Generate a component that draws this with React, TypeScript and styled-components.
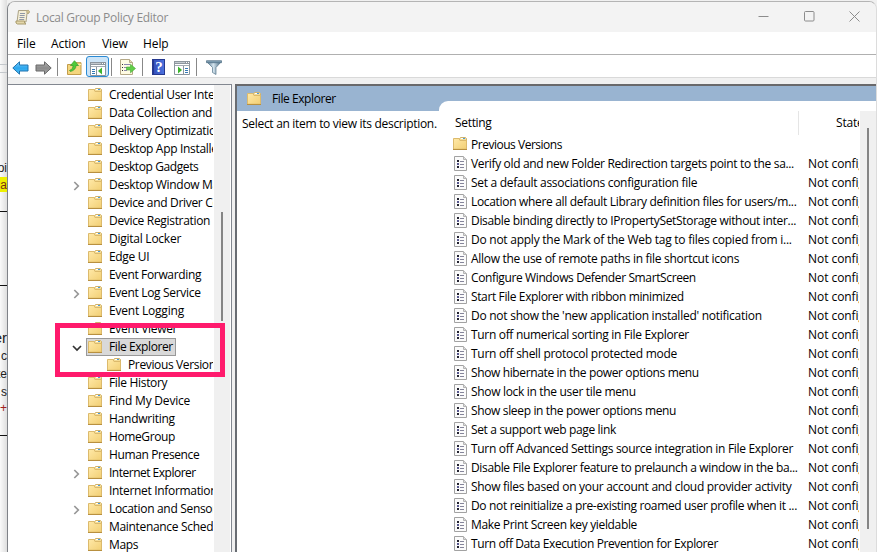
import React from 'react';
import styled, { createGlobalStyle, css } from 'styled-components';

const GlobalStyle = createGlobalStyle`
  * {
    box-sizing: border-box;
  }

  body {
    margin: 0;
    overflow: hidden;
    background: #f0f0f0;
    color: #000;
    font-family: 'Open Sans', 'Noto Sans', sans-serif;
    font-size: 12px;
  }

  svg {
    display: block;
    flex: none;
  }
`;

const Desktop = styled.div`
  display: flex;
  width: 877px;
  height: 552px;
  overflow: hidden;
`;

const BackPage = styled.div`
  flex: none;
  width: 7px;
  height: 552px;
  overflow: hidden;
  background: linear-gradient(90deg, #fafafa, #dedede);
`;

const BackGap = styled.div<{ $height: number }>`
  height: ${({ $height }) => $height}px;
`;

const BackRule = styled.div<{ $color?: string }>`
  height: 1px;
  background: ${({ $color }) => $color || '#111'};
`;

const BackText = styled.div<{ $height: number; $size?: number; $color?: string; $mark?: boolean }>`
  display: flex;
  justify-content: flex-end;
  align-items: center;
  height: ${({ $height }) => $height}px;
  font-family: 'Liberation Sans', sans-serif;
  font-size: ${({ $size }) => $size || 12}px;
  color: ${({ $color }) => $color || '#222'};
  background: ${({ $mark }) => ($mark ? '#eef000' : 'transparent')};
`;

const Window = styled.div`
  flex: none;
  display: flex;
  flex-direction: column;
  width: 870px;
  height: 551px;
  margin-top: 1px;
  border: 1px solid #b4b4b4;
  border-left-color: #7f8287;
  border-right-color: #dcdcdc;
  border-bottom: none;
  border-radius: 8px 8px 0 0;
  background: #f0f0f0;
  overflow: hidden;
`;

const TitleBar = styled.div`
  flex: none;
  display: flex;
  align-items: center;
  height: 30px;
  padding-left: 7px;
  background: #f3f3f3;
`;

const TitleText = styled.div`
  flex: 1;
  margin-left: 6px;
  color: #8c8c8c;
  letter-spacing: -0.3px;
`;

const Caption = styled.div`
  display: flex;
  align-items: center;
  justify-content: center;
  width: 45.5px;
  height: 30px;
  padding: 0 0 2px 3px;
`;

const MenuBar = styled.div`
  flex: none;
  display: flex;
  align-items: center;
  gap: 16px;
  height: 23px;
  padding-left: 9px;
  background: #fff;
  border-bottom: 1px solid #b0b0b0;
`;

const MenuItem = styled.div<{ $width: number }>`
  width: ${({ $width }) => $width}px;
  white-space: nowrap;
  letter-spacing: -0.1px;
`;

const ToolBar = styled.div`
  flex: none;
  display: flex;
  align-items: center;
  height: 23px;
  padding-left: 4px;
  background: #fff;
  border-bottom: 1px solid #d9d9d9;
`;

const Tool = styled.div<{ $active?: boolean; $width: number; $drop?: number; $left?: number; $right?: number }>`
  display: flex;
  align-items: center;
  justify-content: center;
  width: ${({ $width }) => $width}px;
  height: 22px;
  padding: ${({ $drop = 2, $right = 0, $left = 0 }) => `${$drop}px ${$right}px 0 ${$left}px`};
  ${({ $active }) =>
    $active &&
    css`
      height: 21px;
      margin: 1px 2px 0 0;
      background: #cce4f7;
      border: 1px solid #2a8ad4;
      border-radius: 3px;
    `}
`;

const ToolSeparator = styled.div`
  width: 1px;
  height: 18px;
  margin-top: 1px;
  background: #888;
`;

const Panels = styled.div`
  flex: 1;
  display: flex;
  min-height: 0;
  padding-top: 6px;
`;

const TreePanel = styled.div`
  flex: none;
  display: flex;
  width: 224px;
  background: #fff;
  border-top: 1px solid #828790;
  border-right: 1px solid #828790;
`;

const Tree = styled.div`
  width: 205px;
  margin-right: 1px;
  padding-top: 1px;
  overflow: hidden;
`;

const TreeRow = styled.div<{ $depth: number }>`
  display: flex;
  align-items: center;
  height: 18px;
  padding-left: ${({ $depth }) => 63 + $depth * 19}px;
  white-space: nowrap;
`;

const Expander = styled.div`
  flex: none;
  display: flex;
  justify-content: center;
  width: 11px;
  margin-right: 4px;
  padding-top: 2px;
`;

const TreeLabel = styled.div<{ $selected?: boolean }>`
  flex: none;
  display: flex;
  align-items: center;
  gap: 7px;
  height: 18px;
  padding: 0 2px 0 1px;
  border: 1px solid ${({ $selected }) => ($selected ? '#999' : 'transparent')};
  background: ${({ $selected }) => ($selected ? '#d9d9d9' : 'transparent')};
`;

const Text = styled.span<{ $tracking?: number; $drop?: number }>`
  padding-top: ${({ $drop }) => $drop || 0}px;
  line-height: 16px;
  letter-spacing: ${({ $tracking }) => $tracking ?? -0.32}px;
  white-space: nowrap;
`;

const ScrollBar = styled.div<{ $width: number }>`
  flex: none;
  display: flex;
  justify-content: center;
  width: ${({ $width }) => $width}px;
  background: #f0f0f0;
`;

const Thumb = styled.div<{ $top: number; $height: number }>`
  width: 2px;
  height: ${({ $height }) => $height}px;
  margin-top: ${({ $top }) => $top}px;
  background: #858585;
`;

const ResultPanel = styled.div`
  flex: 1;
  min-width: 0;
  display: flex;
  flex-direction: column;
  margin-left: 3px;
  border-top: 2px solid #69696b;
  border-left: 2px solid #696d73;
  background: #fff;
`;

const ResultBody = styled.div`
  flex: 1;
  min-height: 0;
  display: grid;
  grid-template-columns: 202px 1fr;
  background: linear-gradient(#99b4d1 25px, #fff 25px);
`;

const Description = styled.div`
  display: flex;
  flex-direction: column;
`;

const DescriptionHeader = styled.div`
  display: flex;
  align-items: center;
  gap: 11px;
  height: 25px;
  padding-left: 10px;
`;

const DescriptionText = styled.div`
  display: flex;
  padding: 5px 0 0 5px;
  white-space: nowrap;
`;

const ListPane = styled.div`
  display: flex;
  flex-direction: column;
  min-width: 0;
  margin-top: 15px;
  border-top-left-radius: 9px;
  background: #fff;
`;

const ListBody = styled.div`
  flex: 1;
  display: flex;
  min-height: 0;
  margin-top: 10px;
`;

const List = styled.div`
  width: 420px;
  margin-right: 1px;
  overflow: hidden;
  padding-left: 12px;
`;

const ListHeader = styled.div`
  display: flex;
  height: 24px;
`;

const HeaderCell = styled.div<{ $width?: number; $indent: number }>`
  flex: none;
  display: flex;
  align-items: center;
  width: ${({ $width }) => ($width ? `${$width}px` : 'auto')};
  padding-left: ${({ $indent }) => $indent}px;
  border-right: ${({ $width }) => ($width ? '1px solid #e5e5e5' : 'none')};
`;

const ListRow = styled.div`
  display: flex;
  align-items: center;
  height: 19px;
  white-space: nowrap;
`;

const NameCell = styled.div<{ $policy?: boolean }>`
  flex: none;
  display: flex;
  align-items: center;
  gap: 4px;
  width: 357px;
  padding-left: ${({ $policy }) => ($policy ? 3 : 2)}px;
`;

// Marker frame drawn over the tree to point out the selected node
const Highlight = styled.div`
  position: absolute;
  left: 55px;
  top: 323px;
  width: 170px;
  height: 54px;
  border: 5px solid #ff1a6c;
`;

const FolderSvg = styled.svg<{ $lift: number }>`
  margin-bottom: ${({ $lift }) => $lift}px;
`;

const FolderIcon = ({ lift = 0 }: { lift?: number }) => (
  <FolderSvg $lift={lift} width="14" height="13" viewBox="0 0 14 13">
    <defs>
      <linearGradient id="folder" x1="0" y1="0" x2="1" y2="1">
        <stop offset="0" stopColor="#ffe9a8" />
        <stop offset="1" stopColor="#f2cf74" />
      </linearGradient>
    </defs>
    <path d="M6.500 4V1.500l1-1h5l1 1V4z" fill="#f4dc96" stroke="#d0b26c" />
    <path d="M8 1.500h2" stroke="#fff" />
    <path d="M10 1.500h2" stroke="#4a9ad8" />
    <path d="M.5 12.200V1.500h5.500l1 2h6.500v8.700z" fill="url(#folder)" stroke="#dcba6c" />
    <path d="M0 12.500h14" stroke="#b89040" />
  </FolderSvg>
);

const PolicyIcon = () => (
  <svg width="13" height="15" viewBox="0 0 13 15">
    <path d="M.5.5h9l3 3v11H.5z" fill="#fbfbfb" stroke="#a2a2a2" />
    <path d="M9.500.5v3h3" fill="#ddd" stroke="#b4b4b4" />
    <path d="M3 4h2v2H3zM3 10h2v2H3z" fill="#222230" />
    <path d="M3 7h2v2H3z" fill="#55558c" />
    <path d="M6 5.500h4M6 8.500h4M6 11.500h4" stroke="#85859a" />
  </svg>
);

const Chevron = ({ open }: { open?: boolean }) =>
  open ? (
    <svg width="10" height="8" viewBox="0 0 10 8">
      <path d="M1 2l4 4 4-4" fill="none" stroke="#333" strokeWidth="1.700" />
    </svg>
  ) : (
    <svg width="7" height="10" viewBox="0 0 7 10">
      <path d="M1.300 1l4 4-4 4" fill="none" stroke="#979797" strokeWidth="1.700" />
    </svg>
  );

const ScrollIcon = () => (
  <svg width="15" height="16" viewBox="0 0 15 16">
    <path d="M3.500 1.500h10q1 1 0 3h-1.500l-1 8.500H2z" fill="#f5efd8" stroke="#aaa184" />
    <path d="M11.500 1.500q2.500-.8 3 1t-2.500 2z" fill="#d4c593" stroke="#b1a57d" strokeWidth=".7" />
    <path d="M1 12h8.500q-.5 2.500 1.500 3H2.500Q.3 14.500 1 12z" fill="#e4d7aa" stroke="#a89a6c" />
    <path d="M5 4.500h5M4.700 6.500h5M4.500 8.500h5M4.200 10.500h5" stroke="#9098a6" />
  </svg>
);

const ArrowIcon = ({ back }: { back?: boolean }) => (
  <svg width="17" height="14" viewBox="0 0 17 14" transform={back ? undefined : 'scale(-1 1)'}>
    <defs>
      <linearGradient id={back ? 'back' : 'forward'} x1="0" y1="0" x2="0" y2="1">
        <stop offset="0" stopColor={back ? '#7fd0ff' : '#b5b5b5'} />
        <stop offset=".5" stopColor={back ? '#2ca7ee' : '#8b8b8b'} />
        <stop offset="1" stopColor={back ? '#50c1f9' : '#aaa'} />
      </linearGradient>
    </defs>
    <path
      d="M.8 7L7.500 .8V4H16v6H7.500v3.200z"
      fill={`url(#${back ? 'back' : 'forward'})`}
      stroke={back ? '#2173ae' : '#686868'}
    />
  </svg>
);

const FolderUpIcon = () => (
  <svg width="15" height="15" viewBox="0 0 15 15">
    <path d="M.5 14.500V4.500h7l1-1.800h5.500v11.800z" fill="#f4d67e" stroke="#c39d4b" />
    <path d="M10 4.500h4" stroke="#fff0b8" />
    <path d="M2.500 10.500c2.800-1 3.500-3 3.500-5H3.500L7.500.7l4 4.800H9c0 3-2 5-5.500 6z" fill="#4fca3b" stroke="#329c28" strokeWidth=".7" />
  </svg>
);

const PaneIcon = ({ flip }: { flip?: boolean }) => (
  <svg width="16" height="14" viewBox="0 0 16 14">
    <path d="M.5.5h15v13H.5z" fill="#fff" stroke="#8b959e" />
    <path d="M0 0h16v3H0z" fill="#8d969e" />
    <path d="M1 1.500h10" stroke="#c4cad0" />
    <path d="M12 1.500h1M14 1.500h1" stroke="#fff" />
    <path d="M1 4.500h14" stroke="#a4acb4" />
    {flip ? (
      <>
        <path d="M9.500 5v8" stroke="#8b959e" />
        <path d="M4 5.500L8 9l-4 3.500z" fill="#3cb52e" />
        <path d="M11 7.500h3M11 9.500h3M11 11.500h3" stroke="#3579b5" />
      </>
    ) : (
      <>
        <path d="M6.500 5v8" stroke="#8b959e" />
        <path d="M12 5.500L8 9l4 3.500z" fill="#3cb52e" />
        <path d="M2 7.500h3M2 9.500h3M2 11.500h3" stroke="#3579b5" />
      </>
    )}
  </svg>
);

const ExportIcon = () => (
  <svg width="16" height="16" viewBox="0 0 16 16">
    <path d="M.5.5h9l3 3v12H.5z" fill="#fffbe3" stroke="#b5a987" />
    <path d="M9.500.5v3h3" fill="#e9dcb4" stroke="#b5a987" />
    <path d="M2 5.500h1M2 8.500h1M2 11.500h1" stroke="#333" />
    <path d="M4 5.500h6M4 8.500h3M4 11.500h3" stroke="#8b86ac" />
    <path d="M6.500 8h4V5.200l5 4.300-5 4.300V11h-4z" fill="#62ce49" stroke="#48a936" strokeWidth=".6" />
  </svg>
);

const HelpBox = styled.div`
  width: 13px;
  height: 16px;
  border: 1px solid #25388f;
  border-left-width: 2px;
  background: linear-gradient(90deg, #3551bd, #4c72de);
  color: #fff;
  font: bold 15px/14px 'Liberation Serif', serif;
  text-align: center;
`;

const FilterIcon = () => (
  <svg width="16" height="15" viewBox="0 0 16 15">
    <defs>
      <linearGradient id="filter" x1="0" y1="0" x2="1" y2="0">
        <stop offset="0" stopColor="#55768e" />
        <stop offset=".45" stopColor="#d4e4ee" />
        <stop offset="1" stopColor="#44677f" />
      </linearGradient>
    </defs>
    <path d="M1 2l5.500 5.500v5l3.500 2V7.500L15 2z" fill="url(#filter)" stroke="#56758b" strokeWidth=".7" />
    <path d="M.5.700h15v2H.5z" fill="#82a1b5" stroke="#4c6b81" strokeWidth=".7" />
  </svg>
);

interface Node {
  label: string;
  expander?: 'open' | 'closed';
  selected?: boolean;
  depth?: number;
  tracking?: number;
}

const nodes: Node[] = [
  { label: 'Credential User Interface' },
  { label: 'Data Collection and Preview Builds' },
  { label: 'Delivery Optimization' },
  { label: 'Desktop App Installer' },
  { label: 'Desktop Gadgets', tracking: -0.4 },
  { label: 'Desktop Window Manager', expander: 'closed' },
  { label: 'Device and Driver Compatibility' },
  { label: 'Device Registration' },
  { label: 'Digital Locker', tracking: -0.25 },
  { label: 'Edge UI' },
  { label: 'Event Forwarding', tracking: -0.34 },
  { label: 'Event Log Service', expander: 'closed' },
  { label: 'Event Logging', tracking: -0.2 },
  { label: 'Event Viewer' },
  { label: 'File Explorer', expander: 'open', selected: true, tracking: -0.42 },
  { label: 'Previous Versions', depth: 1, tracking: -0.36 },
  { label: 'File History' },
  { label: 'Find My Device', tracking: -0.2 },
  { label: 'Handwriting', tracking: -0.25 },
  { label: 'HomeGroup', tracking: -0.4 },
  { label: 'Human Presence', tracking: -0.38 },
  { label: 'Internet Explorer', expander: 'closed', tracking: -0.5 },
  { label: 'Internet Information Services' },
  { label: 'Location and Sensors', expander: 'closed' },
  { label: 'Maintenance Scheduler' },
  { label: 'Maps' },
];

const settings: { name: string; tracking?: number }[] = [
  { name: 'Verify old and new Folder Redirection targets point to the sa...', tracking: -0.34 },
  { name: 'Set a default associations configuration file', tracking: -0.29 },
  { name: 'Location where all default Library definition files for users/m...' },
  { name: 'Disable binding directly to IPropertySetStorage without inter...' },
  { name: 'Do not apply the Mark of the Web tag to files copied from i...', tracking: -0.25 },
  { name: 'Allow the use of remote paths in file shortcut icons', tracking: -0.29 },
  { name: 'Configure Windows Defender SmartScreen', tracking: -0.38 },
  { name: 'Start File Explorer with ribbon minimized', tracking: -0.37 },
  { name: "Do not show the 'new application installed' notification", tracking: -0.26 },
  { name: 'Turn off numerical sorting in File Explorer' },
  { name: 'Turn off shell protocol protected mode', tracking: -0.29 },
  { name: 'Show hibernate in the power options menu', tracking: -0.37 },
  { name: 'Show lock in the user tile menu' },
  { name: 'Show sleep in the power options menu', tracking: -0.35 },
  { name: 'Set a support web page link', tracking: -0.35 },
  { name: 'Turn off Advanced Settings source integration in File Explorer', tracking: -0.31 },
  { name: 'Disable File Explorer feature to prelaunch a window in the ba...', tracking: -0.36 },
  { name: 'Show files based on your account and cloud provider activity', tracking: -0.29 },
  { name: 'Do not reinitialize a pre-existing roamed user profile when it ...', tracking: -0.34 },
  { name: 'Make Print Screen key yieldable', tracking: -0.35 },
  { name: 'Turn off Data Execution Prevention for Explorer', tracking: -0.39 },
];

const App: React.FC = () => {
  return (
    <>
      <GlobalStyle />
      <Desktop>
        <BackPage>
          <BackGap $height={64} />
          <BackRule $color="#c4c8cc" />
          <BackGap $height={7} />
          <BackRule $color="#c4c8cc" />
          <BackGap $height={87} />
          <BackText $height={16}>oi</BackText>
          <BackGap $height={1} />
          <BackText $height={15} $mark $color="#7a3010">a</BackText>
          <BackGap $height={19} />
          <BackRule />
          <BackGap $height={73} />
          <BackRule />
          <BackGap $height={41} />
          <BackText $height={20} $size={15}>er</BackText>
          <BackText $height={18}>c</BackText>
          <BackText $height={18}>te</BackText>
          <BackText $height={17}>s</BackText>
          <BackText $height={16} $color="#a02020">+</BackText>
          <BackGap $height={19} />
          <BackRule />
        </BackPage>
        <Window>
          <TitleBar>
            <ScrollIcon />
            <TitleText>Local Group Policy Editor</TitleText>
            <Caption>
              <svg width="11" height="11"><path d="M.5 5.500h10" stroke="#8c8c8c" /></svg>
            </Caption>
            <Caption>
              <svg width="11" height="11"><rect x=".5" y=".5" width="9.500" height="9.500" rx="1" fill="none" stroke="#8c8c8c" /></svg>
            </Caption>
            <Caption>
              <svg width="11" height="11"><path d="M.5.5l10 10M10.500.5l-10 10" stroke="#8c8c8c" /></svg>
            </Caption>
          </TitleBar>
          <MenuBar>
            <MenuItem $width={18}>File</MenuItem>
            <MenuItem $width={35}>Action</MenuItem>
            <MenuItem $width={25}>View</MenuItem>
            <MenuItem $width={26}>Help</MenuItem>
          </MenuBar>
          <ToolBar>
            <Tool $width={16} $drop={4}><ArrowIcon back /></Tool>
            <Tool $width={29} $drop={4} $left={1}><ArrowIcon /></Tool>
            <ToolSeparator />
            <Tool $width={28} $drop={3} $left={4}><FolderUpIcon /></Tool>
            <Tool $active $width={23} $drop={5}><PaneIcon /></Tool>
            <ToolSeparator />
            <Tool $width={30} $left={2}><ExportIcon /></Tool>
            <ToolSeparator />
            <Tool $width={31}><HelpBox>?</HelpBox></Tool>
            <Tool $width={22} $drop={4} $right={6}><PaneIcon flip /></Tool>
            <ToolSeparator />
            <Tool $width={33} $drop={3}><FilterIcon /></Tool>
          </ToolBar>
          <Panels>
            <TreePanel>
              <Tree>
                {nodes.map((node) => (
                  <TreeRow key={node.label} $depth={node.depth || 0}>
                    <Expander>{node.expander && <Chevron open={node.expander === 'open'} />}</Expander>
                    <TreeLabel $selected={node.selected}>
                      <FolderIcon lift={1} />
                      <Text $tracking={node.tracking}>{node.label}</Text>
                    </TreeLabel>
                  </TreeRow>
                ))}
              </Tree>
              <ScrollBar $width={16}>
                <Thumb $top={127} $height={109} />
              </ScrollBar>
            </TreePanel>
            <ResultPanel>
              <ResultBody>
                <Description>
                  <DescriptionHeader>
                    <FolderIcon />
                    <Text $tracking={-0.42} $drop={1}>File Explorer</Text>
                  </DescriptionHeader>
                  <DescriptionText>
                    <Text $tracking={-0.3}>Select an item to view its description.</Text>
                  </DescriptionText>
                </Description>
                <ListPane>
                  <ListBody>
                    <List>
                      <ListHeader>
                        <HeaderCell $width={348} $indent={4}><Text>Setting</Text></HeaderCell>
                        <HeaderCell $indent={37}><Text $tracking={-0.2}>State</Text></HeaderCell>
                      </ListHeader>
                      <ListRow>
                        <NameCell>
                          <FolderIcon lift={2} />
                          <Text $drop={1} $tracking={-0.48}>Previous Versions</Text>
                        </NameCell>
                      </ListRow>
                      {settings.map(({ name, tracking }) => (
                        <ListRow key={name}>
                          <NameCell $policy>
                            <PolicyIcon />
                            <Text $drop={1} $tracking={tracking}>{name}</Text>
                          </NameCell>
                          <Text $drop={1} $tracking={-0.05}>Not configured</Text>
                        </ListRow>
                      ))}
                    </List>
                    <ScrollBar $width={16}>
                      <Thumb $top={17} $height={401} />
                    </ScrollBar>
                  </ListBody>
                </ListPane>
              </ResultBody>
            </ResultPanel>
          </Panels>
        </Window>
      </Desktop>
      <Highlight />
    </>
  );
};

export default App;
